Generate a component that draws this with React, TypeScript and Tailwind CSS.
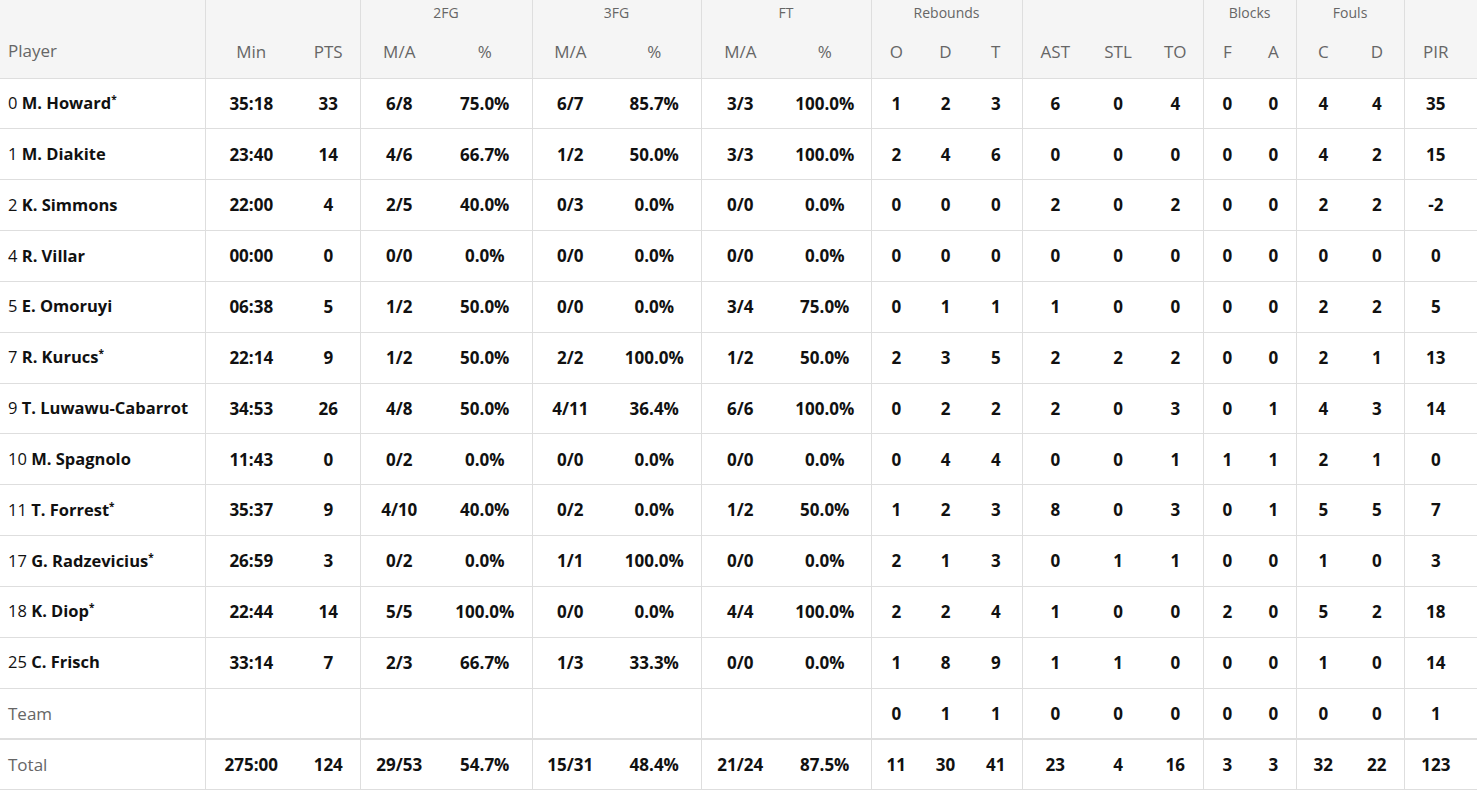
import React from 'react';

type Row = {
    no: string;
    name: string;
    starter?: boolean;
    stats: string[];
};

// Min, PTS, 2FG M/A, %, 3FG M/A, %, FT M/A, %, O, D, T, AST, STL, TO, F, A, C, D, PIR
const players: Row[] = [
    { no: '0', name: 'M. Howard', starter: true, stats: ['35:18', '33', '6/8', '75.0%', '6/7', '85.7%', '3/3', '100.0%', '1', '2', '3', '6', '0', '4', '0', '0', '4', '4', '35'] },
    { no: '1', name: 'M. Diakite', stats: ['23:40', '14', '4/6', '66.7%', '1/2', '50.0%', '3/3', '100.0%', '2', '4', '6', '0', '0', '0', '0', '0', '4', '2', '15'] },
    { no: '2', name: 'K. Simmons', stats: ['22:00', '4', '2/5', '40.0%', '0/3', '0.0%', '0/0', '0.0%', '0', '0', '0', '2', '0', '2', '0', '0', '2', '2', '-2'] },
    { no: '4', name: 'R. Villar', stats: ['00:00', '0', '0/0', '0.0%', '0/0', '0.0%', '0/0', '0.0%', '0', '0', '0', '0', '0', '0', '0', '0', '0', '0', '0'] },
    { no: '5', name: 'E. Omoruyi', stats: ['06:38', '5', '1/2', '50.0%', '0/0', '0.0%', '3/4', '75.0%', '0', '1', '1', '1', '0', '0', '0', '0', '2', '2', '5'] },
    { no: '7', name: 'R. Kurucs', starter: true, stats: ['22:14', '9', '1/2', '50.0%', '2/2', '100.0%', '1/2', '50.0%', '2', '3', '5', '2', '2', '2', '0', '0', '2', '1', '13'] },
    { no: '9', name: 'T. Luwawu-Cabarrot', stats: ['34:53', '26', '4/8', '50.0%', '4/11', '36.4%', '6/6', '100.0%', '0', '2', '2', '2', '0', '3', '0', '1', '4', '3', '14'] },
    { no: '10', name: 'M. Spagnolo', stats: ['11:43', '0', '0/2', '0.0%', '0/0', '0.0%', '0/0', '0.0%', '0', '4', '4', '0', '0', '1', '1', '1', '2', '1', '0'] },
    { no: '11', name: 'T. Forrest', starter: true, stats: ['35:37', '9', '4/10', '40.0%', '0/2', '0.0%', '1/2', '50.0%', '1', '2', '3', '8', '0', '3', '0', '1', '5', '5', '7'] },
    { no: '17', name: 'G. Radzevicius', starter: true, stats: ['26:59', '3', '0/2', '0.0%', '1/1', '100.0%', '0/0', '0.0%', '2', '1', '3', '0', '1', '1', '0', '0', '1', '0', '3'] },
    { no: '18', name: 'K. Diop', starter: true, stats: ['22:44', '14', '5/5', '100.0%', '0/0', '0.0%', '4/4', '100.0%', '2', '2', '4', '1', '0', '0', '2', '0', '5', '2', '18'] },
    { no: '25', name: 'C. Frisch', stats: ['33:14', '7', '2/3', '66.7%', '1/3', '33.3%', '0/0', '0.0%', '1', '8', '9', '1', '1', '0', '0', '0', '1', '0', '14'] },
];

const teamStats = ['', '', '', '', '', '', '', '', '0', '1', '1', '0', '0', '0', '0', '0', '0', '0', '1'];
const totalStats = ['275:00', '124', '29/53', '54.7%', '15/31', '48.4%', '21/24', '87.5%', '11', '30', '41', '23', '4', '16', '3', '3', '32', '22', '123'];

const subHeaders = ['Min', 'PTS', 'M/A', '%', 'M/A', '%', 'M/A', '%', 'O', 'D', 'T', 'AST', 'STL', 'TO', 'F', 'A', 'C', 'D', 'PIR'];
const widths = [92, 63, 78, 94, 76, 93, 78, 92, 50, 49, 52, 66, 60, 55, 48, 45, 54, 54, 73];
// stat column indexes that start a new group (get a left border)
const groupStarts = new Set([0, 2, 4, 6, 8, 11, 14, 16, 18]);

const groups = [
    { label: '', span: 2 },
    { label: '2FG', span: 2 },
    { label: '3FG', span: 2 },
    { label: 'FT', span: 2 },
    { label: 'Rebounds', span: 3 },
    { label: '', span: 3 },
    { label: 'Blocks', span: 2 },
    { label: 'Fouls', span: 2 },
    { label: '', span: 1 },
];

const cellBorder = (i: number) => (groupStarts.has(i) ? 'border-l border-[#dedede]' : '');

const StatCells: React.FC<{ stats: string[] }> = ({ stats }) => (
    <>
        {stats.map((s, i) => (
            <td key={i} className={`${cellBorder(i)} text-center font-bold text-[#111] ${i === 18 ? 'pr-[10px]' : ''}`}>
                {s}
            </td>
        ))}
    </>
);

const App: React.FC = () => {
    return (
        <div className="w-[1477px] h-[790px] overflow-hidden bg-white" style={{ fontFamily: '"Open Sans", "Noto Sans", sans-serif' }}>
            <table className="table-fixed border-collapse w-[1477px] text-[17px] text-[#111]">
                <colgroup>
                    <col style={{ width: 205 }} />
                    {widths.map((w, i) => (
                        <col key={i} style={{ width: w }} />
                    ))}
                </colgroup>
                <thead className="bg-[#f5f5f5] text-[#666]">
                    <tr className="h-[24px]">
                        <th className="p-0"></th>
                        {groups.map((g, i) => (
                            <th key={i} colSpan={g.span} className="p-0 border-l border-[#dedede] text-[14px] font-normal text-center align-middle">
                                {g.label}
                            </th>
                        ))}
                    </tr>
                    <tr className="h-[54px] border-b border-[#dedede]">
                        <th className="pl-[8px] text-left font-normal text-[17px]">Player</th>
                        {subHeaders.map((h, i) => (
                            <th key={i} className={`${cellBorder(i)} font-normal text-center text-[17px] pt-[1px] ${i === 18 ? 'pr-[10px]' : ''}`}>
                                {h}
                            </th>
                        ))}
                    </tr>
                </thead>
                <tbody>
                    {players.map((p) => (
                        <tr key={p.no} className="h-[50.85px] border-b border-[#dedede]">
                            <td className="pl-[8px] whitespace-nowrap text-[16.5px]">
                                {p.no} <span className="font-bold">{p.name}</span>
                                {p.starter && <span className="font-bold text-[10px] align-[6px]">*</span>}
                            </td>
                            <StatCells stats={p.stats} />
                        </tr>
                    ))}
                    <tr className="h-[50.85px] border-b-2 border-[#dedede]">
                        <td className="pl-[8px] text-[#666]">Team</td>
                        <StatCells stats={teamStats} />
                    </tr>
                    <tr className="h-[50.85px] border-b border-[#dedede]">
                        <td className="pl-[8px] text-[#666]">Total</td>
                        <StatCells stats={totalStats} />
                    </tr>
                </tbody>
            </table>
        </div>
    );
};

export default App;
